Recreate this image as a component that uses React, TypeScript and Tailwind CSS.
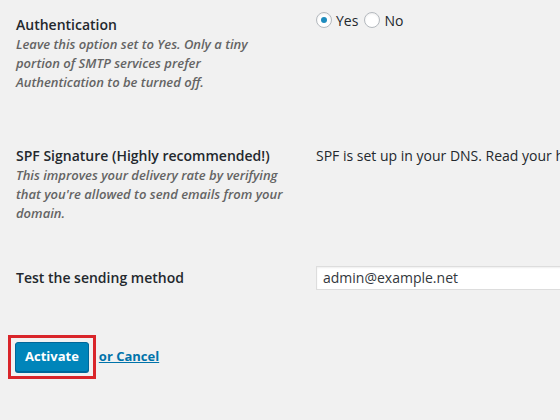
export default function App() {
  const font = { fontFamily: '"Open Sans", "Noto Sans", sans-serif' }
  return (
    <div className="w-[560px] h-[420px] overflow-hidden bg-[#f1f1f1] text-[#23282d]" style={font}>
      {/* Authentication */}
      <div className="flex pt-[12px]">
        <div className="w-[316px] shrink-0 pl-4 pt-[3px]">
          <h3 className="text-[14px] leading-[19px] font-semibold">Authentication</h3>
          <p className="text-[13px] leading-[19px] font-semibold italic text-[#646464] mt-[1px] pr-[32px]">
            Leave this option set to Yes. Only a tiny portion of SMTP services prefer Authentication to be turned off.
          </p>
        </div>
        <div className="flex items-center gap-[6px] h-[16px] text-[14px] whitespace-nowrap">
          <label className="flex items-center gap-[4px]">
            <span className="w-4 h-4 rounded-full border border-[#b4b9be] bg-white flex items-center justify-center shadow-[inset_0_1px_2px_rgba(0,0,0,0.07)]">
              <span className="w-[6px] h-[6px] rounded-full bg-[#1e8cbe]" />
            </span>
            Yes
          </label>
          <label className="flex items-center gap-[4px]">
            <span className="w-4 h-4 rounded-full border border-[#b4b9be] bg-white shadow-[inset_0_1px_2px_rgba(0,0,0,0.07)]" />
            No
          </label>
        </div>
      </div>

      {/* SPF */}
      <div className="flex mt-[54px]">
        <div className="w-[316px] shrink-0 pl-4">
          <h3 className="text-[14px] leading-[19px] font-semibold whitespace-nowrap">SPF Signature (Highly recommended!)</h3>
          <p className="text-[13px] leading-[19px] font-semibold italic text-[#646464] mt-[1px] pr-[32px]">
            This improves your delivery rate by verifying that you're allowed to send emails from your domain.
          </p>
        </div>
        <div className="text-[14px] leading-[19px] whitespace-nowrap">
          SPF is set up in your DNS. Read your host's documentation
        </div>
      </div>

      {/* Test */}
      <div className="flex mt-[42px] items-center">
        <div className="w-[316px] shrink-0 pl-4">
          <h3 className="text-[14px] leading-[19px] font-semibold">Test the sending method</h3>
        </div>
        <div className="flex-1">
          <input
            readOnly
            value="admin@example.net"
            className="w-[300px] h-[24px] bg-white border border-[#ddd] px-[6px] text-[14px] text-[#32373c] outline-none shadow-[inset_0_1px_2px_rgba(0,0,0,0.07)]"
            style={font}
          />
        </div>
      </div>

      {/* Actions */}
      <div className="flex items-center mt-[45px] pl-2">
        <div className="border-[3px] border-[#d9252a] p-[4px]">
          <button className="h-[30px] px-[9px] bg-[#0085ba] border border-[#006799] rounded-[3px] text-white text-[13px] font-bold shadow-[0_1px_0_#006799]">
            Activate
          </button>
        </div>
        <a href="#" className="ml-[3px] text-[13px] font-bold text-[#0073aa] underline">
          or Cancel
        </a>
      </div>
    </div>
  )
}
